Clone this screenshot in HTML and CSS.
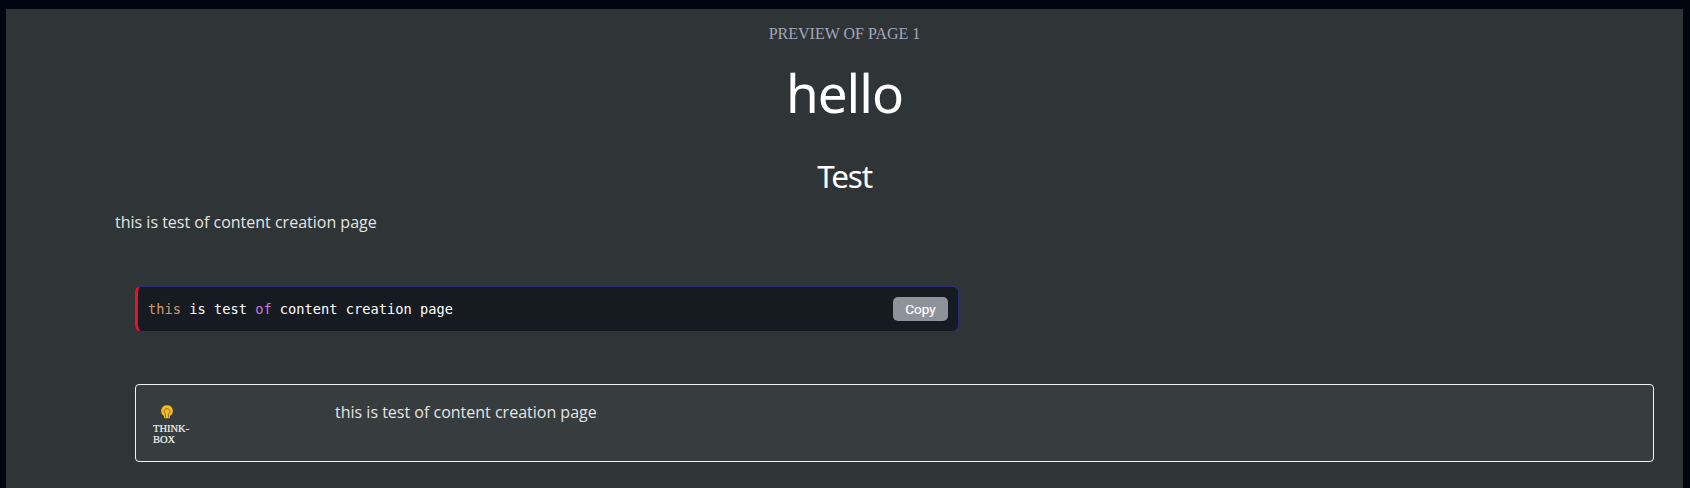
FILE: index.html
```
<!DOCTYPE html>
<html lang="en">
<head>
<meta charset="utf-8">
<title>Preview</title>
<link rel="stylesheet" href="styles.css">
</head>
<body>
<main class="panel">
  <div class="label">PREVIEW OF PAGE 1</div>
  <h1 class="title">hello</h1>
  <h2 class="subtitle">Test</h2>
  <p class="text intro">this is test of content creation page</p>
  <div class="code">
    <code class="code-text"><span class="kw-orange">this</span> is test <span class="kw-purple">of</span> content creation page</code>
    <button class="copy">Copy</button>
  </div>
  <section class="think">
    <div class="think-side">
      <svg class="bulb" viewBox="0 0 12 14">
        <path d="M6 .2a5.8 5.8 0 0 0-3.3 10.6q.7.6.7 2.4h5.2q0-1.8.7-2.4A5.8 5.8 0 0 0 6 .2z" fill="#f5b921"/>
        <path d="M4.5 12.4V9L3.3 7.6a2.9 2.9 0 1 1 5.4 0L7.5 9v3.4" fill="none" stroke="#7b6531" stroke-width=".8"/>
      </svg>
      <div class="think-name">THINK-<br>BOX</div>
    </div>
    <p class="text">this is test of content creation page</p>
  </section>
</main>
</body>
</html>
```
FILE: styles.css
```
* { box-sizing: border-box; }
body {
  margin: 0;
  height: 488px;
  padding: 9px 7px 0 6px;
  overflow: hidden;
  background: #02050f;
}
.panel {
  height: 479px;
  padding: 15px 29px 0 109px;
  background: #2f3437;
  overflow: hidden;
}
.label, .title, .subtitle {
  margin: 0 -29px 0 -109px;
  text-align: center;
}
.label {
  font: 16px/20px "Liberation Serif", serif;
  color: #a3a8ba;
}
.title {
  margin-top: 13px;
  font: 400 53px/72px "Noto Sans", sans-serif;
  letter-spacing: -1px;
  color: #fff;
}
.subtitle {
  margin-top: 25px;
  font: 400 31.5px/44px "Noto Sans", sans-serif;
  letter-spacing: -1.2px;
  color: #fff;
}
.text {
  margin: 0;
  font: 16px/24px "Open Sans", sans-serif;
  color: #e4e4e4;
}
.intro { margin-top: 12px; }
.code {
  display: flex;
  align-items: center;
  justify-content: space-between;
  width: 824px;
  height: 47px;
  margin: 51px 0 0 20px;
  padding: 0 10px 1px 10px;
  border: 1px solid #2b2b77;
  border-top-width: 2px;
  border-left: 3px solid #e5132b;
  border-radius: 7px;
  background: #161b22;
}
.code-text {
  font: 13.7px/20px "DejaVu Sans Mono", monospace;
  color: #fff;
}
.kw-orange { color: #d19a66; }
.kw-purple { color: #c678dd; }
.copy {
  width: 55px;
  height: 24px;
  padding: 0;
  border: 0;
  border-radius: 5px;
  background: #8f919b;
  color: #fff;
  font: 400 13.5px/24px Roboto, sans-serif;
  -webkit-text-stroke: 0.2px #fff;
}
.think {
  display: flex;
  height: 78px;
  margin: 52px 0 0 20px;
  padding: 15px 17px 15px 16px;
  border: 1px solid #f2f2f2;
  border-radius: 4px;
  background: #373c3f;
}
.think-side { width: 183px; padding-top: 5px; }
.bulb { display: block; width: 12px; height: 14px; margin-left: 9px; }
.think-name {
  margin: 4px 0 0 1px;
  font: 10.5px/11px "Liberation Serif", serif;
  color: #f2f2f2;
  -webkit-text-stroke: 0.2px #f2f2f2;
}
```
